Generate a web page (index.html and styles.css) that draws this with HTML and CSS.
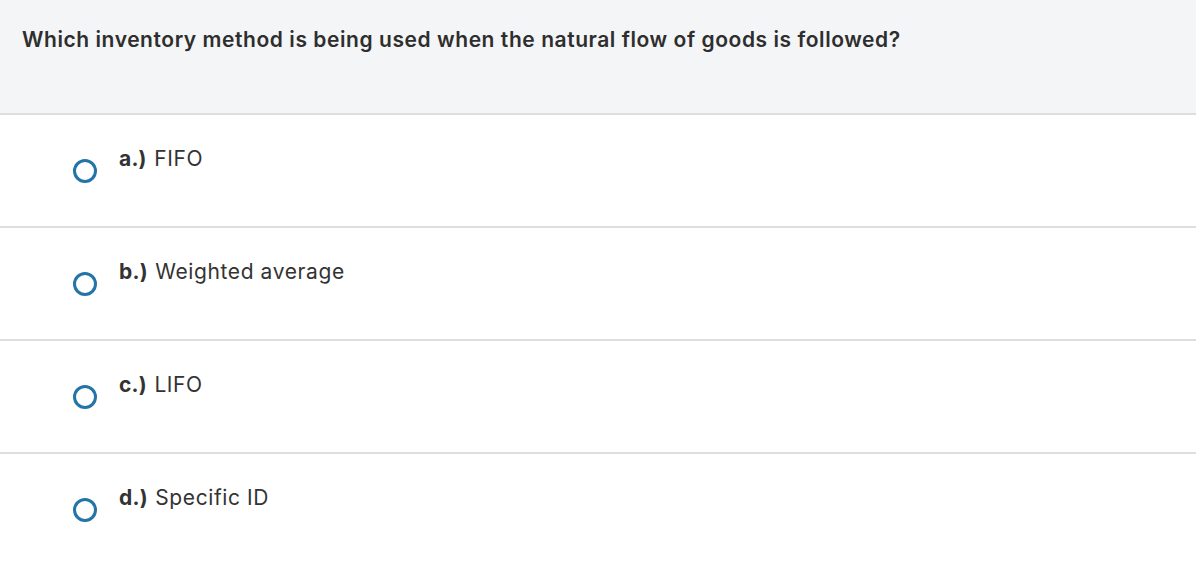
FILE: index.html
```html
<!DOCTYPE html>
<html lang="en">
<head>
<meta charset="utf-8">
<title>Question</title>
<link rel="stylesheet" href="styles.css">
</head>
<body>
<div class="question">
  <p class="prompt">Which inventory method is being used when the natural flow of goods is followed?</p>
</div>
<ul class="options">
  <li class="option"><span class="radio"></span><span class="label"><b>a.)</b> FIFO</span></li>
  <li class="option"><span class="radio"></span><span class="label"><b>b.)</b> Weighted average</span></li>
  <li class="option"><span class="radio"></span><span class="label"><b>c.)</b> LIFO</span></li>
  <li class="option"><span class="radio"></span><span class="label"><b>d.)</b> Specific ID</span></li>
</ul>
</body>
</html>
```
FILE: styles.css
```css
html, body {
  margin: 0;
  padding: 0;
  background: #ffffff;
}
body {
  font-family: Inter, Lato, "Open Sans", Arial, sans-serif;
  color: #333333;
}
.question {
  background: #f4f5f7;
  height: 113px;
  box-sizing: border-box;
  padding: 28px 22px 0 22px;
}
.prompt {
  margin: 0;
  font-size: 21px;
  line-height: 24px;
  font-weight: 600;
  letter-spacing: 0.56px;
  color: #2e2e2e;
}
.options {
  list-style: none;
  margin: 0;
  padding: 0;
}
.option {
  display: flex;
  align-items: flex-start;
  box-sizing: border-box;
  height: 113px;
  border-top: 2px solid #dedede;
  padding: 32px 0 0 73px;
}
.option:last-child {
  height: 111px;
}
.radio {
  flex: none;
  width: 24px;
  height: 24px;
  box-sizing: border-box;
  border: 3px solid #2474a8;
  border-radius: 50%;
  margin-top: 12px;
  margin-right: 22px;
}
.label {
  font-size: 21px;
  line-height: 24px;
  letter-spacing: 0.6px;
  color: #333333;
}
.label b {
  font-weight: 700;
  letter-spacing: 0.2px;
  margin-right: 1px;
}
```
